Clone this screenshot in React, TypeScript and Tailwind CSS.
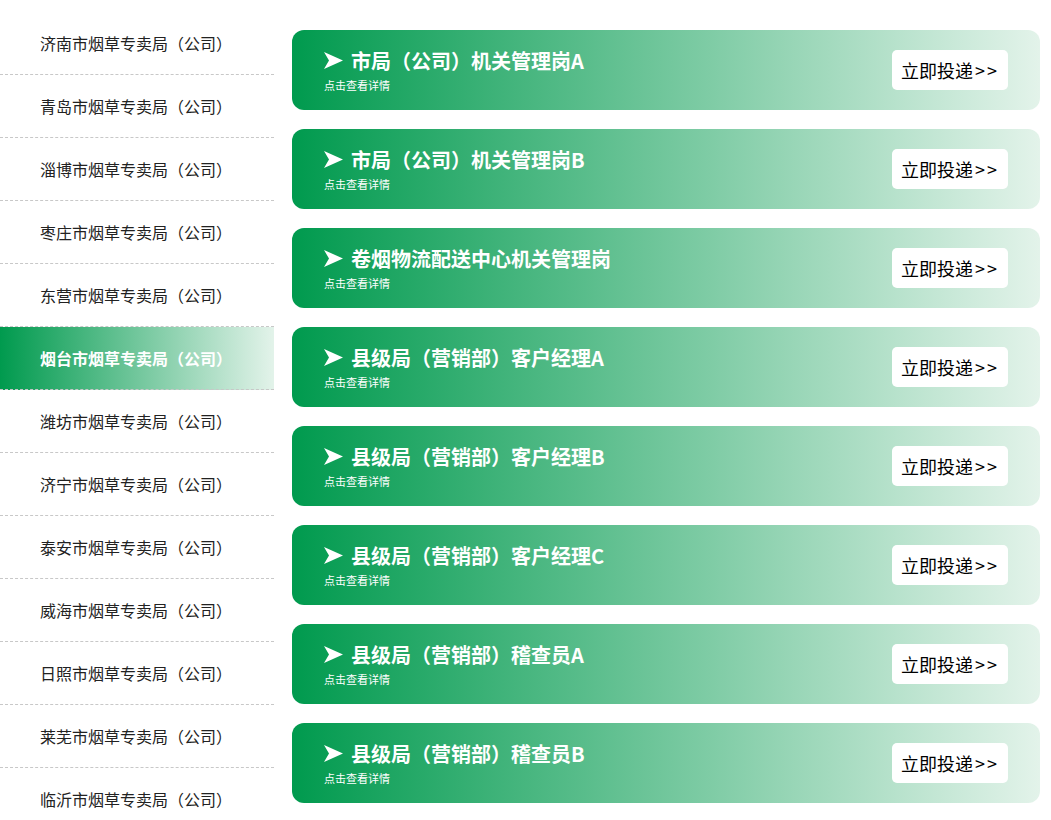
import React from 'react';

const cities = [
  '济南', '青岛', '淄博', '枣庄', '东营', '烟台', '潍坊',
  '济宁', '泰安', '威海', '日照', '莱芜', '临沂',
];

const jobs = [
  '市局（公司）机关管理岗A',
  '市局（公司）机关管理岗B',
  '卷烟物流配送中心机关管理岗',
  '县级局（营销部）客户经理A',
  '县级局（营销部）客户经理B',
  '县级局（营销部）客户经理C',
  '县级局（营销部）稽查员A',
  '县级局（营销部）稽查员B',
];

function Arrow() {
  return (
    <svg width="19" height="17" viewBox="0 0 19 17" className="shrink-0">
      <polygon points="0,0 19,8.5 0,17 5,8.5" fill="#ffffff" />
    </svg>
  );
}

export default function App() {
  const active = 5;
  return (
    <div
      className="flex w-[1051px] h-[820px] overflow-hidden bg-white"
      style={{ fontFamily: '"Microsoft YaHei", "Noto Sans CJK SC", sans-serif' }}
    >
      {/* sidebar */}
      <ul className="w-[274px] shrink-0 pt-[12px]">
        {cities.map((c, i) => (
          <li
            key={c}
            className={
              'h-[63px] flex items-center pl-[40px] text-[16px] border-b border-dashed border-[#c8c8c8] ' +
              (i === active
                ? 'bg-[linear-gradient(to_right,#009a4e,#e3f3ea)] text-white font-bold'
                : 'text-[#222]')
            }
          >
            {c}市烟草专卖局（公司）
          </li>
        ))}
      </ul>

      {/* job list */}
      <div className="flex flex-col gap-[19px] pt-[30px] pl-[18px] w-[766px]">
        {jobs.map((j) => (
          <div
            key={j}
            className="h-[80px] w-[748px] rounded-[12px] bg-[linear-gradient(to_right,#009a4e,#e3f3ea)] flex items-center justify-between pl-[32px] pr-[32px]"
          >
            <div className="flex flex-col">
              <div className="flex items-center gap-[8px] text-white font-bold text-[20px] leading-[24px]">
                <Arrow />
                <span>{j}</span>
              </div>
              <span className="text-white text-[11px] leading-[14px] mt-[5px]">点击查看详情</span>
            </div>
            <button className="w-[116px] h-[40px] bg-white rounded-[5px] text-black text-[18px] flex items-center justify-center">
              立即投递<span className="tracking-[2px] ml-[2px]">&gt;&gt;</span>
            </button>
          </div>
        ))}
      </div>
    </div>
  );
}
